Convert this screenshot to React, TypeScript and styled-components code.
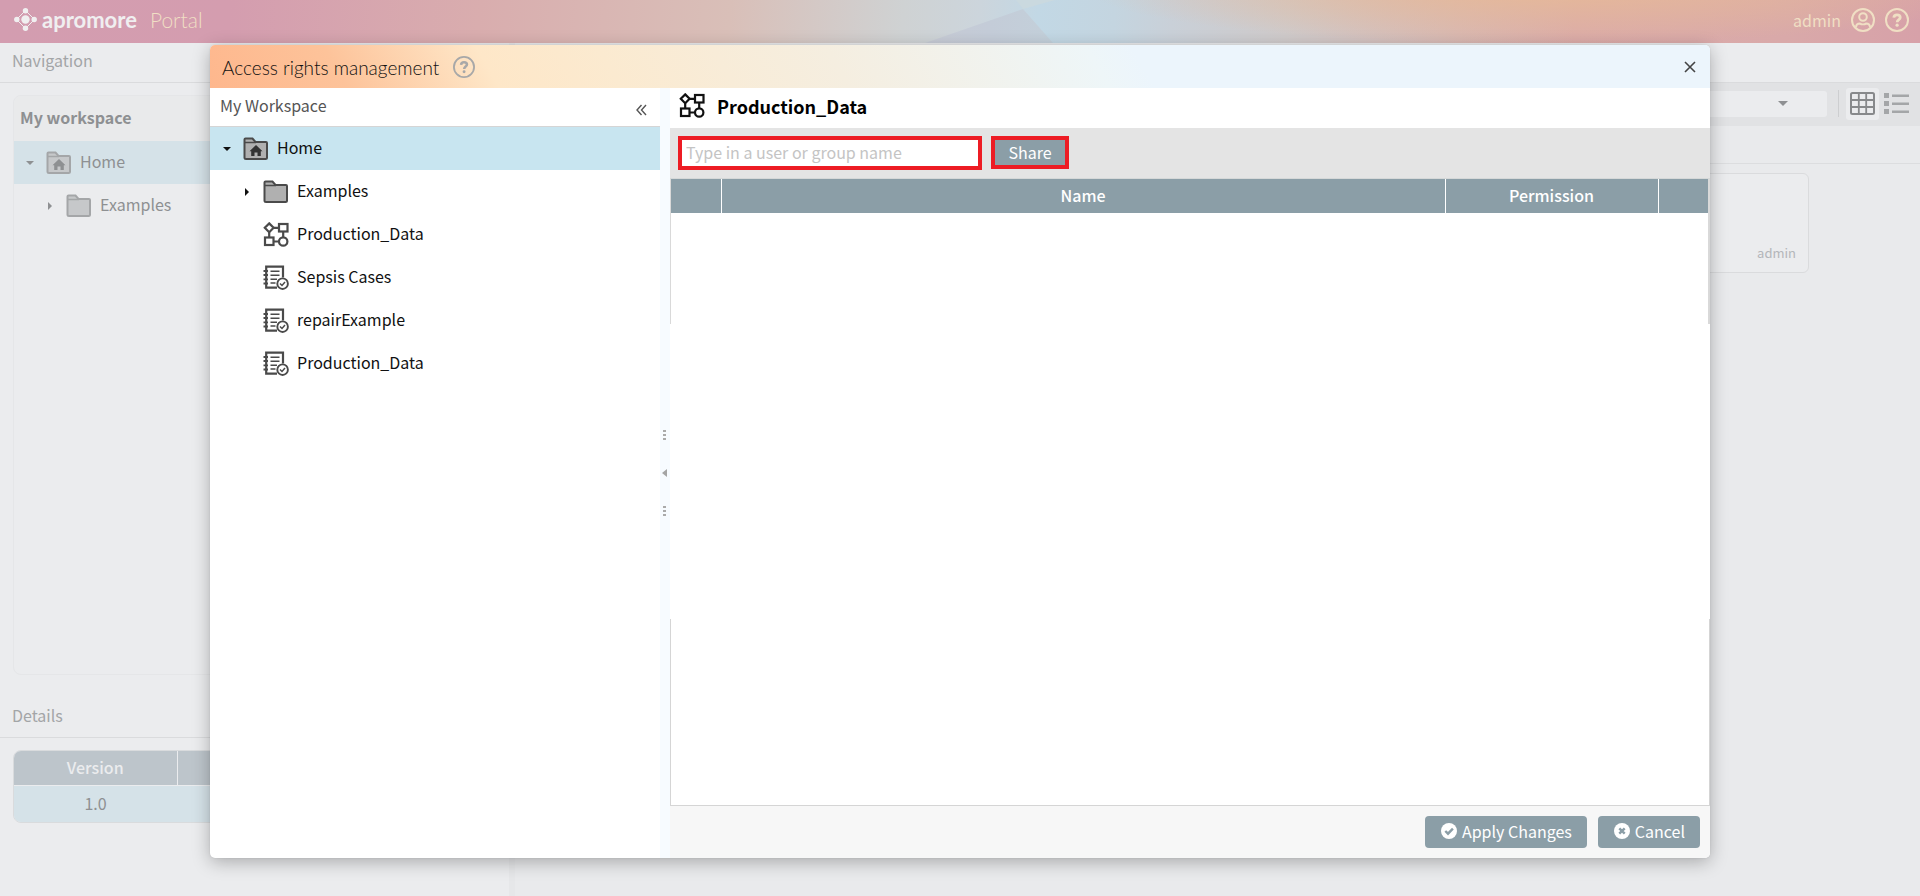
import React from 'react';
import styled, { createGlobalStyle, css } from 'styled-components';

const GlobalStyle = createGlobalStyle`
  *, *::before, *::after { box-sizing: border-box; }
  html, body, #root { height: 100%; }
  body {
    margin: 0;
    overflow: hidden;
    background: #e9eaec;
    color: #8e9092;
    font-family: 'Noto Sans CJK SC', 'Noto Sans', sans-serif;
    font-size: 16px;
    line-height: 24px;
  }
  button, input, select { font: inherit; color: inherit; margin: 0; }
  button { border: 0; padding: 0; background: none; cursor: pointer; }
  svg { display: block; flex: none; }
  h1, h2, h3, ul { margin: 0; padding: 0; font: inherit; list-style: none; }
`;

/* Portal behind the dialog */

const Portal = styled.div`
  display: flex;
  flex-direction: column;
  height: 100vh;
`;

const TopBar = styled.header`
  position: relative;
  display: flex;
  align-items: center;
  flex: none;
  height: 43px;
  padding: 0 11px 4px 14px;
  color: #f0dfc4;
  background:
    radial-gradient(ellipse 460px 56px at 1545px -12px, #e6b998 0%, #e6b99800 100%),
    linear-gradient(95deg, #d39db0 0%, #d49daf 12%, #d9adae 25%, #d9bfb8 38%, #cfd2d3 47%, #ccd5dc 51%, #c2d8e5 54%, #c4d5e0 58%, #c9d0d8 61%, #cfcaca 67%, #d8b8b3 76%, #dbaba9 82%, #d9a9a9 93%, #d7a1a9 100%);
`;

const Facets = styled.svg`
  position: absolute;
  top: 0;
  left: 48.2%;
`;

const Brand = styled.span`
  display: flex;
  align-items: center;
  gap: 5px;
  color: #f0eff0;
  font: bold 22px/24px Lato, sans-serif;
`;

const Product = styled.span`
  margin-left: 13px;
  font: 300 21px/24px Lato, sans-serif;
`;

const UserArea = styled.div`
  display: flex;
  align-items: center;
  gap: 10px;
  margin-left: auto;
`;

const IconButton = styled.button`
  display: flex;
  align-items: center;
  justify-content: center;
`;

const Workspace = styled.div`
  display: flex;
  flex: 1;
  min-height: 0;
`;

const Sidebar = styled.aside`
  display: flex;
  flex-direction: column;
  flex: 0 0 509px;
  background: #ebecee;
`;

const PaneTitle = styled.h2`
  flex: none;
  height: 40px;
  padding: 5px 12px 0;
  border-bottom: 1px solid #dadbdd;
  color: #a3a5a7;
`;

const NavPanel = styled.section`
  flex: 1;
  margin: 12px 13px 23px;
  border: 1px solid #e5e6e8;
  border-radius: 8px;
  overflow: hidden;
`;

const NavHeading = styled.h3`
  height: 45px;
  padding: 9px 6px;
  background: #e9eaeb;
  font-weight: bold;
`;

const DetailsPane = styled.section`
  flex: none;
  height: 198px;
`;

const DetailsFrame = styled.div`
  margin: 12px 13px;
  border: 1px solid #d9dbdd;
  border-radius: 8px;
  overflow: hidden;
`;

const VersionTable = styled.table`
  width: 100%;
  border-collapse: collapse;
  table-layout: fixed;
  text-align: center;

  th {
    height: 34px;
    padding: 0 0 2px;
    border-right: 1px solid #ebecee;
    background: #bdc5cb;
    color: #ebecee;
    font-weight: 500;
  }
  td { height: 37px; padding: 0 0 2px; background: #d5e2e8; border-top: 1px solid #ebecee; }
  th:first-child { width: 163px; }
`;

const SidebarEdge = styled.div`
  flex: 0 0 6px;
  background: #e6e7e9;
`;

const Content = styled.main`
  flex: 1;
  min-width: 0;
`;

const ContentTitle = styled.div`
  height: 40px;
  border-bottom: 1px solid #dadbdd;
  background: #ebecee;
`;

const ViewBar = styled.div`
  display: flex;
  align-items: center;
  justify-content: flex-end;
  height: 43px;
  padding: 0 7px 2px 0;
  background: #e1e2e4;
`;

const SearchSelect = styled.div`
  display: flex;
  align-items: center;
  justify-content: flex-end;
  width: 400px;
  height: 26px;
  padding-right: 39px;
  border-radius: 3px;
  background: #ebecee;
`;

const BarDivider = styled.span`
  width: 2px;
  height: 27px;
  margin: 0 6px 0 10px;
  border-right: 1px solid #cdced0;
`;

const ViewButton = styled(IconButton)<{ $active?: boolean }>`
  width: 33px;
  height: 32px;
  margin-left: 1px;
  border-radius: 3px;
  background: ${(p) => (p.$active ? '#ebecee' : 'transparent')};
`;

const Crumbs = styled.div`
  height: 38px;
  border-bottom: 1px solid #dcdddf;
`;

const Card = styled.article`
  display: flex;
  align-items: flex-end;
  justify-content: flex-end;
  width: 280px;
  height: 100px;
  margin: 9px 111px 0 auto;
  padding: 7px 12px;
  border: 1px solid #dadbdd;
  border-radius: 6px;
  background: #ebecee;
  color: #b4b6ba;
  font-size: 13px;
`;

/* Tree rows, used in the sidebar and in the dialog */

const TreeRow = styled.li<{ $level: number; $selected?: boolean; $muted?: boolean }>`
  display: flex;
  align-items: center;
  height: 43px;
  padding-left: ${(p) => (p.$muted ? 10 : 11) + p.$level * 20}px;
  ${(p) => p.$selected && css`background: ${p.$muted ? '#d5e2e8' : '#c8e5f0'};`}
`;

const Toggle = styled.span`
  display: flex;
  justify-content: center;
  width: 12px;
  margin-right: 10px;
`;

const TreeLabel = styled.span`
  margin-left: 8px;
  padding-bottom: 3px;
`;

/* Dialog */

const Overlay = styled.div`
  position: absolute;
  inset: 45px 0 38px;
  display: flex;
  justify-content: center;
`;

const Dialog = styled.div`
  display: flex;
  flex-direction: column;
  width: 78.125%;
  border-radius: 5px;
  overflow: hidden;
  background: #fff;
  color: #111;
  box-shadow: 0 4px 18px rgba(0, 0, 0, 0.28), 0 0 2px rgba(0, 0, 0, 0.1);
`;

const DialogHeader = styled.header`
  display: flex;
  align-items: center;
  flex: none;
  height: 43px;
  padding: 0 13px 0 12px;
  background: linear-gradient(60deg, #feb78d 0%, #fdc39a 9%, #fee7c8 19%, #fbead0 27%, #f5eee0 42%, #eef6f8 59%, #ecf5fc 62%);
`;

const DialogTitle = styled.h1`
  margin-right: 14px;
  padding-top: 2px;
  font: 300 19px/24px Lato, sans-serif;
`;

const CloseButton = styled(IconButton)`
  margin-left: auto;
`;

const DialogBody = styled.div`
  display: flex;
  flex: 1;
  min-height: 0;
`;

const TreePane = styled.section`
  flex: 0 0 30%;
`;

const TreePaneHeader = styled.div`
  display: flex;
  justify-content: space-between;
  height: 39px;
  padding: 5px 13px 0 10px;
  border-bottom: 1px solid #d5d5d5;
  color: #555;
`;

const CollapseButton = styled(IconButton)`
  height: 34px;
`;

const Splitter = styled.div`
  display: flex;
  flex-direction: column;
  align-items: center;
  justify-content: center;
  gap: 29px;
  flex: 0 0 10px;
  padding-right: 1px;
  background: #f7fbff;
`;

const RightPane = styled.section`
  display: flex;
  flex-direction: column;
  flex: 1;
  min-width: 0;
`;

const ItemHeader = styled.div`
  display: flex;
  align-items: center;
  gap: 12px;
  flex: none;
  height: 40px;
  padding: 0 9px 5px;
  color: #000;
  font-size: 18px;
  font-weight: bold;
`;

const ShareBar = styled.form`
  display: flex;
  align-items: center;
  gap: 9px;
  flex: none;
  height: 51px;
  padding: 0 8px 1px;
  border-bottom: 1px solid #d5d8d8;
  background: #e4e4e4;
`;

const UserInput = styled.input`
  width: 304px;
  height: 34px;
  padding: 0 4px 2px;
  border: 4px solid #ed1c24;
  border-radius: 0;
  background: #fff;
  outline: none;
  &::placeholder { color: #c4c4c4; opacity: 1; }
`;

const ShareButton = styled.button`
  width: 78px;
  height: 33px;
  padding-bottom: 2px;
  border: 4px solid #ed1c24;
  background: #8b9ea7;
  color: #fff;
`;

const ShareList = styled.div`
  flex: none;
  height: 145px;
  border: solid #d9d9d9;
  border-width: 0 2px 0 1px;
`;

const ShareTable = styled.table`
  width: 100%;
  border-collapse: collapse;
  table-layout: fixed;

  th {
    height: 34px;
    padding: 0 0 2px;
    background: #8b9ea7;
    color: #fff;
    font-weight: 500;
  }
  th + th { border-left: 1px solid #fff; }
`;

const Spacer = styled.div`
  flex: 1;
`;

const LowerFrame = styled.div`
  flex: none;
  height: 187px;
  border: 1px solid #d5d5d5;
  border-top: 0;
`;

const Footer = styled.footer`
  display: flex;
  align-items: center;
  justify-content: flex-end;
  gap: 11px;
  flex: none;
  height: 52px;
  padding: 0 10px;
  background: #f7f7f7;
`;

const FooterButton = styled.button`
  display: flex;
  align-items: center;
  gap: 5px;
  height: 32px;
  padding: 0 15px 2px 16px;
  border-radius: 4px;
  background: #8b9ea7;
  color: #fff;
`;

/* Icons */

const LogoMark = () => (
  <svg width="23" height="23" viewBox="0 0 23 23" fill="#f0eff0">
    <path d="M11.5 2.5 20.5 11.5 11.5 20.5 2.5 11.5Z" fill="none" stroke="#f0eff0" strokeWidth="1" />
    <circle cx="11.5" cy="11.5" r="4.2" />
    <circle cx="11.5" cy="2.8" r="2.7" />
    <circle cx="11.5" cy="20.2" r="2.7" />
    <circle cx="2.8" cy="11.5" r="2.7" />
    <circle cx="20.2" cy="11.5" r="2.7" />
  </svg>
);

const HelpIcon = ({ size, color }: { size: number; color: string }) => (
  <svg width={size} height={size} viewBox="0 0 24 24" fill="none" stroke={color}>
    <circle cx="12" cy="12" r="11" strokeWidth="2" />
    <path d="M8.8 9.6C9 7.6 10.2 6.8 12 6.8c1.9 0 3.2 1 3.2 2.6 0 2.2-3 2.2-3 4.8" strokeWidth="2.8" />
    <circle cx="12.1" cy="17.2" r="1.6" fill={color} stroke="none" />
  </svg>
);

const UserIcon = () => (
  <svg width="24" height="24" viewBox="0 0 24 24" fill="none" stroke="#f0dfc4" strokeWidth="2">
    <circle cx="12" cy="12" r="11" />
    <circle cx="12" cy="9" r="3.8" />
    <path d="M5 19.5C5 16 7 15.6 9 15.6c1.5 1 4.5 1 6 0 2 0 4 .4 4 3.9" />
  </svg>
);

const Folder = ({ home, muted }: { home?: boolean; muted?: boolean }) => (
  <svg width="26" height="24" viewBox="0 0 26 24">
    <path
      d="M1.5 20.5V2.5Q1.5 1.5 2.5 1.5H9.5L12.5 5H23Q24 5 24 6V20.5Q24 22 22.5 22H3Q1.5 22 1.5 20.5Z"
      fill={muted ? '#c6c8ca' : '#b0b0b0'} stroke={muted ? '#a4a6a8' : '#4a4a4a'} strokeWidth="2"
    />
    <path d="M2 5.5H13" stroke={muted ? '#a4a6a8' : '#4a4a4a'} strokeWidth="1.6" />
    {home && (
      <path d="M13 8 19.5 14.2H17.8V19H14.5V15.5H11.5V19H8.2V14.2H6.5Z" fill={muted ? '#8e9092' : '#333'} />
    )}
  </svg>
);

const ModelIcon = ({ color }: { color: string }) => (
  <svg width="26" height="25" viewBox="0 0 26 25" fill="none" stroke={color} strokeWidth="2.2">
    <path d="M6.2 1.4 10.6 5.8 6.2 10.2 1.8 5.8Z" />
    <rect x="16" y="2" width="8.5" height="7.5" />
    <rect x="2" y="15.5" width="8.5" height="7.5" />
    <circle cx="20.2" cy="19.5" r="4.2" />
    <path d="M10.6 5.8H16M6.2 10.2V15.5M20.2 9.5V15.3M10.5 19.5H16" />
  </svg>
);

const LogIcon = () => (
  <svg width="26" height="25" viewBox="0 0 26 25" fill="none" stroke="#4a4a4a">
    <path d="M14 22.7H3.2V1.7H20V12.5" strokeWidth="2.2" />
    <path d="M.5 6H5M.5 10H5M.5 14.3H5M.5 18.5H5" strokeWidth="1.8" />
    <path d="M7.5 6.3H16.5M7.5 10.3H16.5M7.5 14.3H14M7.5 18H12.5" strokeWidth="1.6" />
    <circle cx="19.6" cy="18.7" r="5.3" strokeWidth="1.9" fill="#fff" />
    <path d="M17 18.5 19 20.5 22 17" strokeWidth="1.5" />
  </svg>
);

const Caret = ({ open, color, size = 8 }: { open?: boolean; color: string; size?: number }) =>
  open ? (
    <svg width={size} height={size / 2} viewBox="0 0 8 4"><path d="M0 0H8L4 4Z" fill={color} /></svg>
  ) : (
    <svg width="4" height="8" viewBox="0 0 4 8"><path d="M0 0V8L4 4Z" fill={color} /></svg>
  );

const GridIcon = () => (
  <svg width="25" height="23" viewBox="0 0 25 23" fill="none" stroke="#87898b" strokeWidth="2">
    <rect x="1" y="1" width="23" height="21" rx="1.5" />
    <path d="M8.8 1V22M16.2 1V22M1 8H24M1 15H24" strokeWidth="1.8" />
  </svg>
);

const ListIcon = () => (
  <svg width="25" height="21" viewBox="0 0 25 21" fill="#a4a6a8">
    <path d="M0 0H5V5H0ZM0 8H5V13H0ZM0 16H5V21H0ZM8 1.5H25V4H8ZM8 9.5H25V12H8ZM8 17.5H25V20H8Z" />
  </svg>
);

const Grip = () => (
  <svg width="3" height="10" viewBox="0 0 3 10" fill="#aaa"><path d="M0 0H3V2H0ZM0 4H3V6H0ZM0 8H3V10H0Z" /></svg>
);

const BadgeIcon = ({ path }: { path: string }) => (
  <svg width="16" height="16" viewBox="0 0 16 16">
    <circle cx="8" cy="8" r="8" fill="#fff" />
    <path d={path} fill="none" stroke="#8b9ea7" strokeWidth="2.4" />
  </svg>
);

const items = [
  { label: 'Production_Data', kind: 'model' },
  { label: 'Sepsis Cases', kind: 'log' },
  { label: 'repairExample', kind: 'log' },
  { label: 'Production_Data', kind: 'log' },
];

const FolderRows = ({ muted }: { muted?: boolean }) => {
  const caret = muted ? '#8e9092' : '#111';
  return (
    <>
      <TreeRow $level={0} $selected $muted={muted}>
        <Toggle><Caret open color={caret} /></Toggle>
        <Folder home muted={muted} />
        <TreeLabel>Home</TreeLabel>
      </TreeRow>
      <TreeRow $level={1} $muted={muted}>
        <Toggle><Caret color={caret} /></Toggle>
        <Folder muted={muted} />
        <TreeLabel>Examples</TreeLabel>
      </TreeRow>
    </>
  );
};

export default function App() {
  return (
    <>
      <GlobalStyle />
      <Portal>
        <TopBar>
          <Facets width="132" height="43" viewBox="0 0 132 43" aria-hidden="true">
            <defs>
              <linearGradient id="facet" x1="0" y1="0" x2="1" y2="0">
                <stop offset="0" stopColor="#c7cbd5" />
                <stop offset="0.5" stopColor="#c4ccd8" />
                <stop offset="1" stopColor="#c3d0da" />
              </linearGradient>
            </defs>
            <path d="M0 43 98 9 128 43Z" fill="url(#facet)" />
            <path d="M91 0 98 9 130 0Z" fill="#cad9df" />
          </Facets>
          <Brand><LogoMark />apromore</Brand>
          <Product>Portal</Product>
          <UserArea>
            <span>admin</span>
            <IconButton aria-label="Account"><UserIcon /></IconButton>
            <IconButton aria-label="Help"><HelpIcon size={24} color="#f0dfc4" /></IconButton>
          </UserArea>
        </TopBar>
        <Workspace>
          <Sidebar>
            <PaneTitle>Navigation</PaneTitle>
            <NavPanel>
              <NavHeading>My workspace</NavHeading>
              <ul><FolderRows muted /></ul>
            </NavPanel>
            <DetailsPane>
              <PaneTitle>Details</PaneTitle>
              <DetailsFrame>
                <VersionTable>
                  <thead><tr><th>Version</th><th /></tr></thead>
                  <tbody><tr><td>1.0</td><td /></tr></tbody>
                </VersionTable>
              </DetailsFrame>
            </DetailsPane>
          </Sidebar>
          <SidebarEdge />
          <Content>
            <ContentTitle />
            <ViewBar>
              <SearchSelect><Caret open color="#8e9092" size={10} /></SearchSelect>
              <BarDivider />
              <ViewButton $active aria-label="Grid view"><GridIcon /></ViewButton>
              <ViewButton aria-label="List view"><ListIcon /></ViewButton>
            </ViewBar>
            <Crumbs />
            <Card>admin</Card>
          </Content>
        </Workspace>
      </Portal>

      <Overlay>
        <Dialog role="dialog" aria-labelledby="dialog-title">
          <DialogHeader>
            <DialogTitle id="dialog-title">Access rights management</DialogTitle>
            <IconButton aria-label="Help"><HelpIcon size={22} color="#a8a8a8" /></IconButton>
            <CloseButton aria-label="Close">
              <svg width="14" height="12" viewBox="0 0 14 12"><path d="M2 1 12 11M12 1 2 11" stroke="#444" strokeWidth="1.6" /></svg>
            </CloseButton>
          </DialogHeader>
          <DialogBody>
            <TreePane>
              <TreePaneHeader>
                <span>My Workspace</span>
                <CollapseButton aria-label="Collapse">
                  <svg width="11" height="12" viewBox="0 0 11 12"><path d="M5.5 1 1 6 5.5 11M10 1 5.5 6 10 11" fill="none" stroke="#555" strokeWidth="1.4" /></svg>
                </CollapseButton>
              </TreePaneHeader>
              <ul>
                <FolderRows />
                {items.map((item, i) => (
                  <TreeRow key={i} $level={1}>
                    <Toggle />
                    {item.kind === 'model' ? <ModelIcon color="#4a4a4a" /> : <LogIcon />}
                    <TreeLabel>{item.label}</TreeLabel>
                  </TreeRow>
                ))}
              </ul>
            </TreePane>
            <Splitter>
              <Grip />
              <svg width="5" height="8" viewBox="0 0 5 8"><path d="M5 0V8L0 4Z" fill="#a5a5a5" /></svg>
              <Grip />
            </Splitter>
            <RightPane>
              <ItemHeader><ModelIcon color="#111" />Production_Data</ItemHeader>
              <ShareBar>
                <UserInput aria-label="User or group" placeholder="Type in a user or group name" />
                <ShareButton type="button">Share</ShareButton>
              </ShareBar>
              <ShareList>
                <ShareTable>
                  <colgroup>
                    <col style={{ width: 50 }} />
                    <col />
                    <col style={{ width: 213 }} />
                    <col style={{ width: 50 }} />
                  </colgroup>
                  <thead><tr><th /><th>Name</th><th>Permission</th><th /></tr></thead>
                </ShareTable>
              </ShareList>
              <Spacer />
              <LowerFrame />
              <Footer>
                <FooterButton><BadgeIcon path="M4.3 8 7 10.7 11.9 5.6" />Apply Changes</FooterButton>
                <FooterButton><BadgeIcon path="M5.3 5.3 10.7 10.7M10.7 5.3 5.3 10.7" />Cancel</FooterButton>
              </Footer>
            </RightPane>
          </DialogBody>
        </Dialog>
      </Overlay>
    </>
  );
}
